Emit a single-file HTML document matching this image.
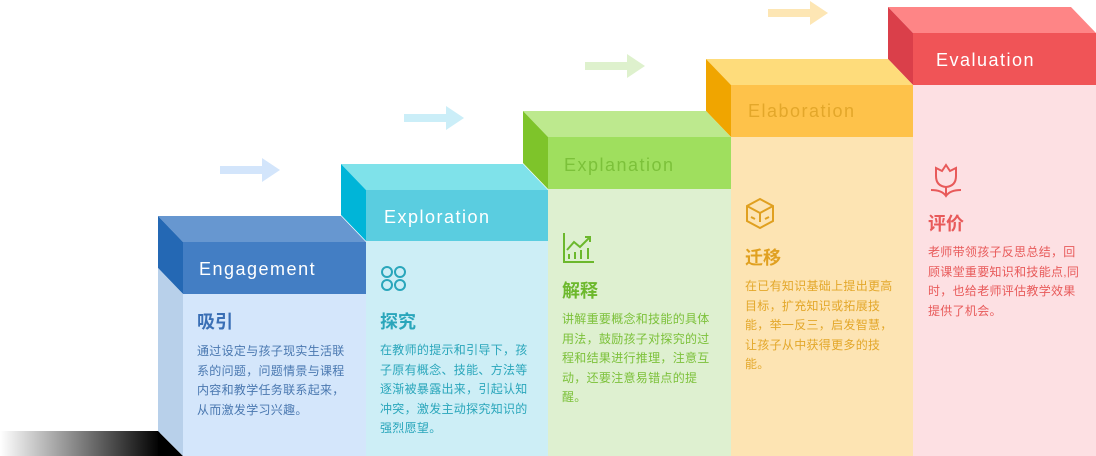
<!DOCTYPE html>
<html><head><meta charset="utf-8"><style>
body{margin:0;width:1096px;height:456px;overflow:hidden;background:#fff;position:relative;font-family:"Liberation Sans","Noto Sans CJK SC",sans-serif}
.a{position:absolute}
.lab{position:absolute;font-size:18px;letter-spacing:1.5px;line-height:20px}
.h{position:absolute;font-size:18px;font-weight:bold;line-height:20px}
.t{position:absolute;font-size:12px;line-height:19.6px;white-space:nowrap;letter-spacing:0.3px}
</style></head><body>
<svg class="a" style="left:0;top:0" width="1096" height="456">
<defs><linearGradient id="g" x1="0" x2="1"><stop offset="0" stop-color="#fff"/><stop offset="1" stop-color="#000"/></linearGradient></defs>
<rect x="0" y="431" width="160" height="25" fill="url(#g)"/>
<polygon points="158,431 183,456 158,456" fill="#000"/>
<polygon points="220,166 262,166 262,158 280,170 262,182 262,174 220,174" fill="#d3e5fb"/>
<polygon points="404,114 446,114 446,106 464,118 446,130 446,122 404,122" fill="#cbeef8"/>
<polygon points="585,62 627,62 627,54 645,66 627,78 627,70 585,70" fill="#def1cd"/>
<polygon points="768,9 810,9 810,1 828,13 810,25 810,17 768,17" fill="#fde6b4"/>
<rect x="913" y="85" width="183" height="371" fill="#fde0e3"/>
<polygon points="888,7 1071,7 1096,33 913,33" fill="#fe8586"/>
<polygon points="888,7 913,33 913,85 888,59" fill="#da3f4a"/>
<rect x="913" y="33" width="183" height="52" fill="#f05457"/>
<rect x="731" y="137" width="182" height="319" fill="#fde4b3"/>
<polygon points="706,59 888,59 913,85 731,85" fill="#fedc7b"/>
<polygon points="706,59 731,85 731,137 706,111" fill="#f0a500"/>
<rect x="731" y="85" width="182" height="52" fill="#fec24a"/>
<rect x="548" y="189" width="183" height="267" fill="#def0d0"/>
<polygon points="523,111 706,111 731,137 548,137" fill="#bde98e"/>
<polygon points="523,111 548,137 548,189 523,163" fill="#7ec42a"/>
<rect x="548" y="137" width="183" height="52" fill="#9fdf5e"/>
<rect x="366" y="241" width="182" height="215" fill="#cdeef6"/>
<polygon points="341,164 523,164 548,190 366,190" fill="#7fe2ea"/>
<polygon points="341,164 366,190 366,241 341,215" fill="#00b5d8"/>
<rect x="366" y="190" width="182" height="51" fill="#5acde0"/>
<rect x="183" y="294" width="183" height="162" fill="#d4e6fb"/>
<polygon points="158,216 341,216 366,242 183,242" fill="#6797d0"/>
<polygon points="158,216 183,242 183,294 158,268" fill="#2468b4"/>
<polygon points="158,268 183,294 183,456 158,431" fill="#b8d0ea"/>
<rect x="183" y="242" width="183" height="52" fill="#437ec4"/>
<g fill="none" stroke="#2aa6bb" stroke-width="2">
<circle cx="387" cy="272" r="5"/><circle cx="400" cy="272" r="5"/><circle cx="387" cy="285" r="5"/><circle cx="400" cy="285" r="5"/></g>
<g fill="none" stroke="#6cb82c" stroke-width="2">
<path d="M564,233 V262 H594"/><path d="M567,250 L574,242 L580,247 L590,237 M585,237 H590 V242"/>
<path d="M569,254V259 M575,252V259 M581,250V259 M588,248V259"/></g>
<g fill="none" stroke="#e0a020" stroke-width="2">
<polygon points="760,199 773,206 773,221 760,228 747,221 747,206"/><path d="M747,206 L760,213 L773,206 M760,213 V222 M751,217 l4,2 M769,217 l-4,2"/></g>
<g fill="none" stroke="#e85a5a" stroke-width="2">
<path d="M936,176 L936,168 L942,171 L946,165 L950,171 L956,168 L956,176 Q956,186 946,187 Q936,186 936,176 Z M946,187 V196 M931,190 Q942,190 946,196 Q950,190 961,190"/></g>
</svg>
<div class="lab" style="left:199px;top:259px;color:#fff">Engagement</div>
<div class="lab" style="left:384px;top:207px;color:#fff">Exploration</div>
<div class="lab" style="left:564px;top:155px;color:#7cc13a">Explanation</div>
<div class="lab" style="left:748px;top:101px;color:#e3a72a">Elaboration</div>
<div class="lab" style="left:936px;top:50px;color:#fff">Evaluation</div>

<div class="h" style="left:197px;top:312px;color:#3a6fb5">吸引</div>
<div class="t" style="left:197px;top:342px;color:#4a78b0">通过设定与孩子现实生活联<br>系的问题，问题情景与课程<br>内容和教学任务联系起来，<br>从而激发学习兴趣。</div>
<div class="h" style="left:380px;top:312px;color:#2aa6bb">探究</div>
<div class="t" style="left:380px;top:341px;color:#2aa6bb">在教师的提示和引导下，孩<br>子原有概念、技能、方法等<br>逐渐被暴露出来，引起认知<br>冲突，激发主动探究知识的<br>强烈愿望。</div>
<div class="h" style="left:562px;top:281px;color:#6cb82c">解释</div>
<div class="t" style="left:562px;top:310px;color:#7cc13a">讲解重要概念和技能的具体<br>用法，鼓励孩子对探究的过<br>程和结果进行推理，注意互<br>动，还要注意易错点的提<br>醒。</div>
<div class="h" style="left:745px;top:248px;color:#e0a020">迁移</div>
<div class="t" style="left:745px;top:277px;color:#e3a72a">在已有知识基础上提出更高<br>目标，扩充知识或拓展技<br>能，举一反三，启发智慧，<br>让孩子从中获得更多的技<br>能。</div>
<div class="h" style="left:928px;top:214px;color:#e85a5a">评价</div>
<div class="t" style="left:928px;top:243px;color:#e85a5a">老师带领孩子反思总结，回<br>顾课堂重要知识和技能点,同<br>时，也给老师评估教学效果<br>提供了机会。</div>
</body></html>
